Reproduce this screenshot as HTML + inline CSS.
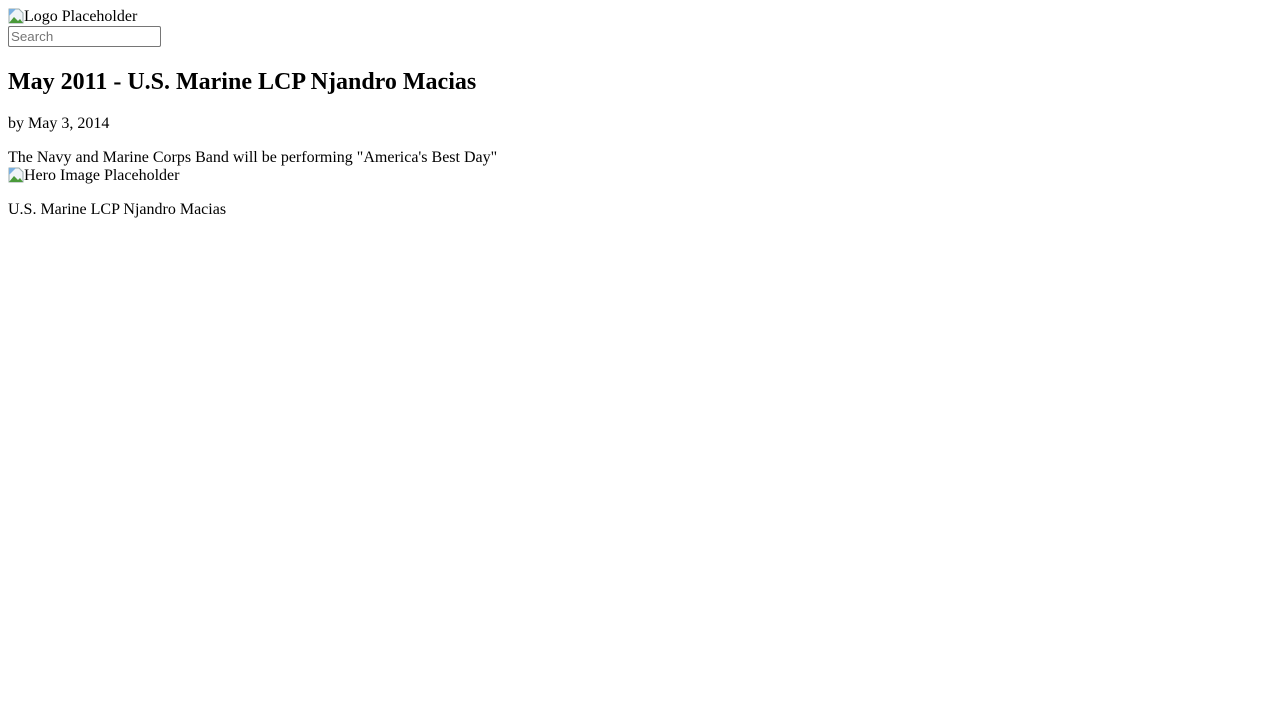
<!DOCTYPE html>
<html><head><style>
body{margin:8px;font-family:"Liberation Serif",serif;font-size:16px;line-height:normal;color:#000;background:#fff}
.ic{display:inline-block;width:16px;height:16px;vertical-align:-3px}
.l{height:18px}
input{font-family:"Liberation Sans",sans-serif;font-size:13.33px;width:147px;padding:2px 2px;border:1px solid #767676;border-radius:2px;margin:0}
h2{font-size:24px;margin:22px 0 19px}
p{margin:16px 0}
</style></head><body>
<div class="l"><svg class="ic" viewBox="0 0 16 16"><path d="M1 1h10l4 4v10H1z" fill="#f0f4f8" stroke="#9aa" stroke-width="1"/><path d="M1 15l5-6 4 4 2-2 3 4z" fill="#4a9a3a"/><path d="M1 1h7L1 8z" fill="#7ab0e0"/></svg>Logo Placeholder</div>
<div><input type="text" placeholder="Search"></div>
<h2>May 2011 - U.S. Marine LCP Njandro Macias</h2>
<p>by May 3, 2014</p>
<div class="l">The Navy and Marine Corps Band will be performing "America's Best Day"</div>
<div class="l"><svg class="ic" viewBox="0 0 16 16"><path d="M1 1h10l4 4v10H1z" fill="#f0f4f8" stroke="#9aa" stroke-width="1"/><path d="M1 15l5-6 4 4 2-2 3 4z" fill="#4a9a3a"/><path d="M1 1h7L1 8z" fill="#7ab0e0"/></svg>Hero Image Placeholder</div>
<p>U.S. Marine LCP Njandro Macias</p>
</body></html>
